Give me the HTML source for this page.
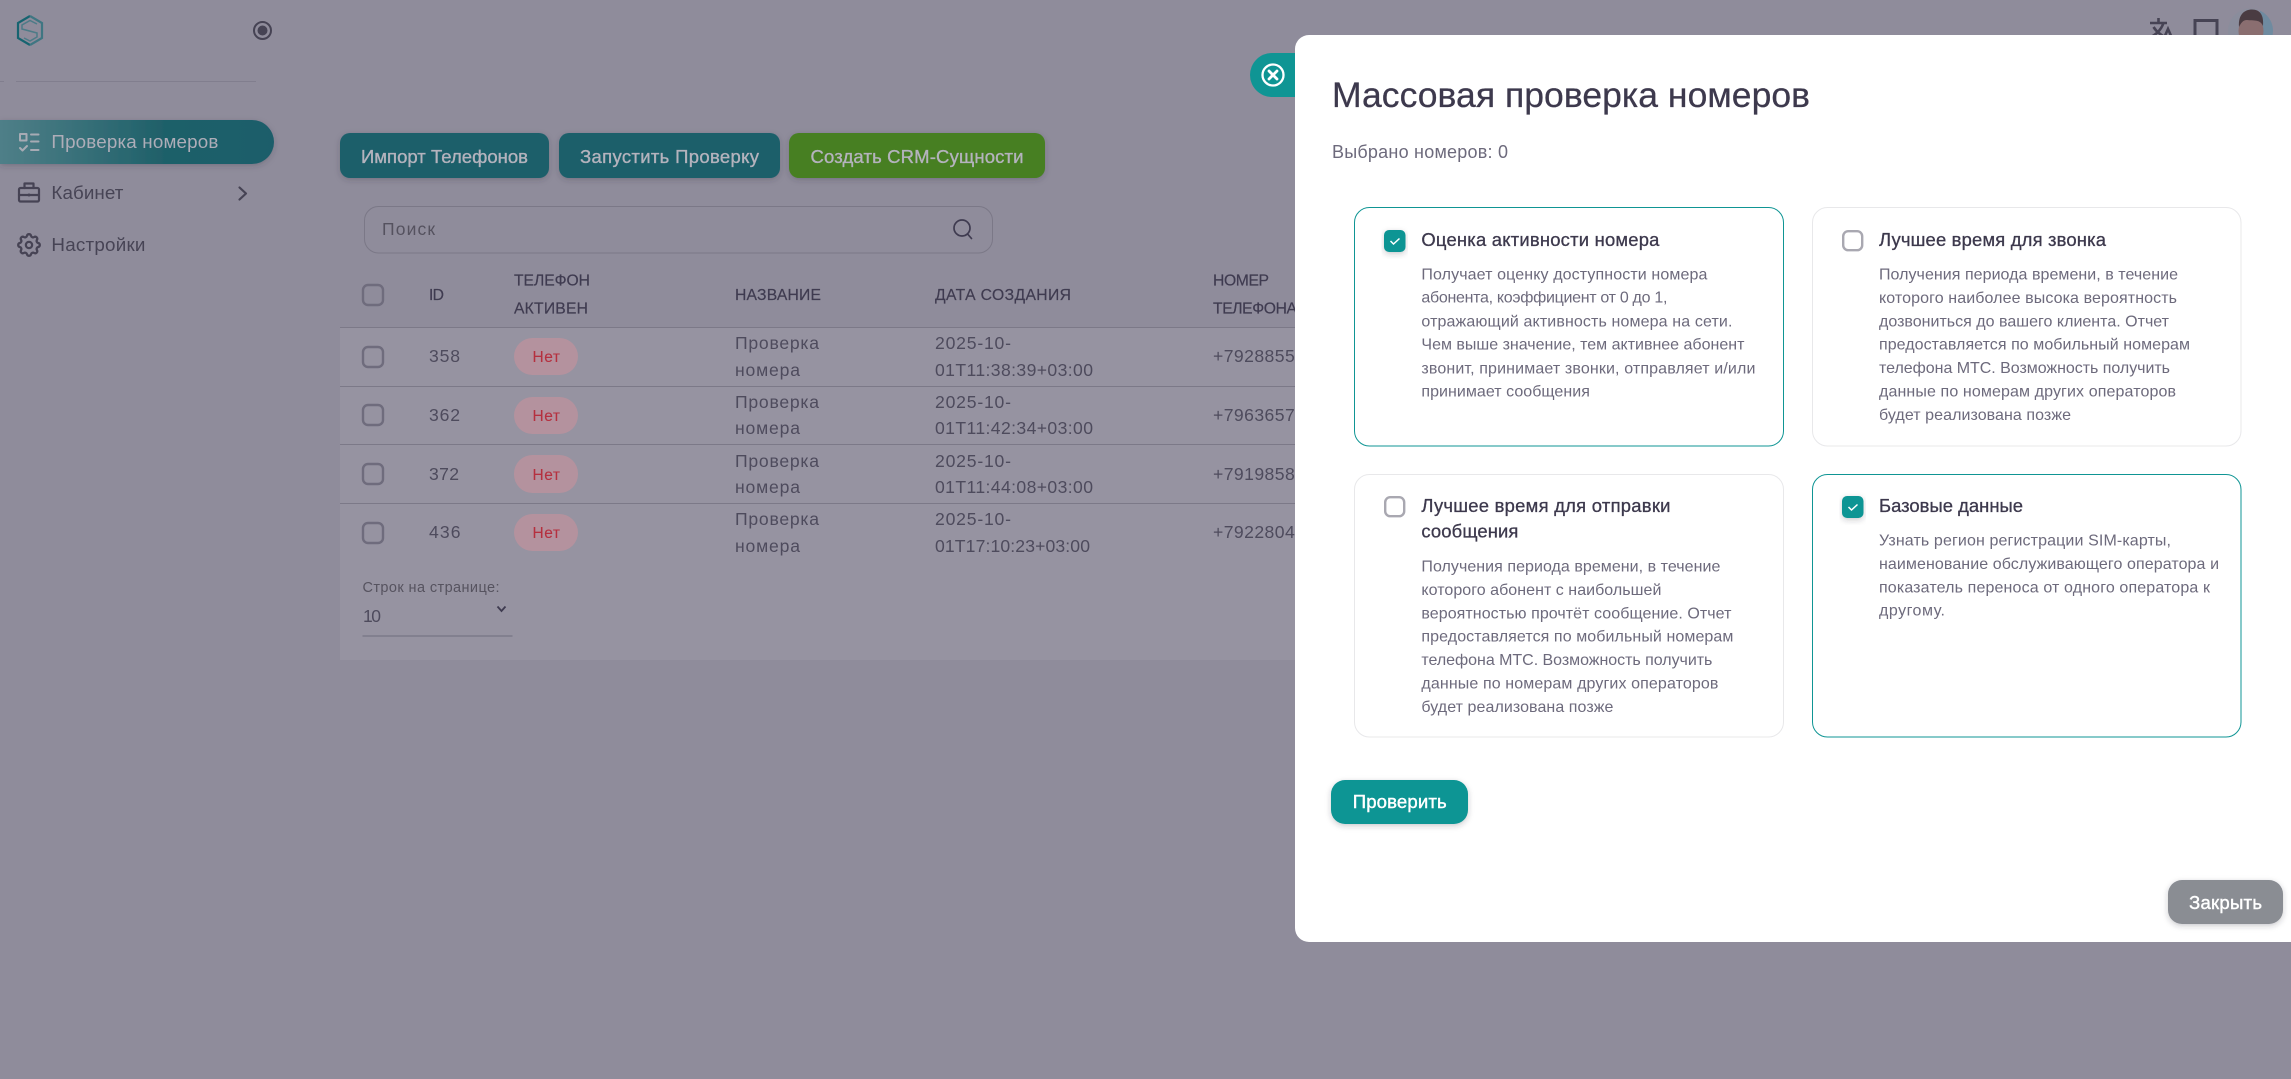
<!DOCTYPE html>
<html lang="ru">
<head>
<meta charset="utf-8">
<title>Массовая проверка номеров</title>
<style>
html,body{margin:0;padding:0;width:2291px;height:1079px;overflow:hidden;background:#8f8c9b}
svg{display:block;position:absolute;left:0;top:0}
text{font-family:"Liberation Sans",sans-serif;white-space:pre}
.side{font-size:18.8px;fill:#474455}
.btn{font-size:18.5px;fill:#b4b3bd;stroke:#b4b3bd;stroke-width:.35px}
.th{font-size:15.7px;fill:#3f3b50;stroke:#3f3b50;stroke-width:.2px}
.td{font-size:17.6px;fill:#4e4b5d}
.no{font-size:15.5px;fill:#b5303f;stroke:#b5303f;stroke-width:.1px}
.t{font-size:18.4px;fill:#3d394d;stroke:#3d394d;stroke-width:.3px}
.b{font-size:16px;fill:#6d6a7c}
.w{font-size:18.6px;fill:#fff;stroke:#fff;stroke-width:.4px}
.ic{fill:none;stroke:#464354;stroke-width:2.2;stroke-linecap:round;stroke-linejoin:round}
.cb{fill:none;stroke:#6f6c7d;stroke-width:2.4}
.cbw{fill:#fff;stroke:#a9a8b1;stroke-width:2.4}
</style>
</head>
<body>
<svg width="2291" height="1079" viewBox="0 0 2291 1079" xmlns="http://www.w3.org/2000/svg">
<defs>
<linearGradient id="pill" x1="0" x2="1" y1="0" y2="0"><stop offset="0" stop-color="#4f7f88"/><stop offset=".6" stop-color="#1f6069"/><stop offset="1" stop-color="#1c5d6a"/></linearGradient>
<filter id="sh" x="-10%" y="-20%" width="120%" height="150%"><feDropShadow dx="0" dy="2" stdDeviation="3" flood-color="#2f2b3d" flood-opacity=".25"/></filter>
<clipPath id="av"><circle cx="2250.5" cy="31" r="22.5"/></clipPath>
</defs>

<!-- page -->
<rect width="2291" height="1079" fill="#8f8c9b"/>
<rect x="340" y="328" width="960" height="332" fill="#9693a1"/>

<!-- logo -->
<g fill="none" stroke-width="2.2">
<path d="M30 16L18 23V38L30 45" stroke="#166470"/>
<path d="M30 16L42 23V38L30 45" stroke="#3f7682"/>
<path d="M37 24L30 20.5L22 25V29L37 33V37L30 41L24 38" stroke="#4d7b87" stroke-width="1.5"/>
</g>
<circle cx="262.5" cy="30.5" r="8.5" fill="none" stroke="#464354" stroke-width="2"/>
<circle cx="262.5" cy="30.5" r="5" fill="#464354"/>
<rect x="16" y="81" width="240" height="1" fill="#817e8e"/>
<rect x="0" y="81" width="4" height="1" fill="#817e8e"/>

<!-- sidebar -->
<path d="M0 120H252a22 22 0 0 1 0 44H0Z" fill="url(#pill)" filter="url(#sh)"/>
<g fill="none" stroke="#a7abb4" stroke-width="2" stroke-linecap="round" stroke-linejoin="round">
<rect x="20" y="134" width="6.5" height="6.5"/>
<path d="M31 134.500H38.500M31 141.500H38.500M31 150H38.500M20 148L22.500 150.500L27 146"/>
</g>
<text class="side" x="51.4" y="148" textLength="167" style="fill:#aeadb8">Проверка номеров</text>
<g class="ic">
<rect x="19" y="188" width="20" height="13.5" rx="1.5"/>
<path d="M24.500 188V183.500H33.500V188M19 195H39"/>
</g>
<circle cx="29" cy="195" r="1.5" fill="#464354"/>
<text class="side" x="51.4" y="199" textLength="72">Кабинет</text>
<path class="ic" d="M239.500 187.500L246 193.500L239.500 199.500"/>
<g transform="translate(14.6 230.6) scale(1.2)" fill="none" stroke="#464354" stroke-width="1.9" stroke-linecap="round" stroke-linejoin="round">
<path d="M10.325 4.317c.426 -1.756 2.924 -1.756 3.35 0a1.724 1.724 0 0 0 2.573 1.066c1.543 -.94 3.31 .826 2.37 2.37a1.724 1.724 0 0 0 1.065 2.572c1.756 .426 1.756 2.924 0 3.35a1.724 1.724 0 0 0 -1.066 2.573c.94 1.543 -.826 3.31 -2.37 2.37a1.724 1.724 0 0 0 -2.572 1.065c-.426 1.756 -2.924 1.756 -3.35 0a1.724 1.724 0 0 0 -2.573 -1.066c-1.543 .94 -3.31 -.826 -2.37 -2.37a1.724 1.724 0 0 0 -1.065 -2.572c-1.756 -.426 -1.756 -2.924 0 -3.35a1.724 1.724 0 0 0 1.066 -2.573c-.94 -1.543 .826 -3.31 2.37 -2.37c1 .608 2.296 .07 2.572 -1.065z"/>
<circle cx="12" cy="12" r="2.6"/>
</g>
<text class="side" x="51.4" y="251" textLength="94">Настройки</text>

<!-- top bar icons -->
<g fill="none" stroke="#464354" stroke-width="2.6">
<path d="M2150 23H2167M2158.500 18V23M2163.500 23C2161 30 2157 34 2151 37M2153.500 27C2156 31 2159 33.500 2163 36M2164 38L2168 29L2172 38"/>
<rect x="2195" y="20.500" width="22" height="22" stroke-width="3"/>
</g>
<g clip-path="url(#av)">
<rect x="2228" y="8" width="46" height="46" fill="#8a8d9c"/>
<rect x="2260" y="8" width="14" height="46" fill="#6f8ba0"/>
<ellipse cx="2251" cy="31" rx="12.5" ry="15" fill="#8a6e70"/>
<path d="M2239 27C2238 14 2245 9.500 2252 9.500C2260 9.500 2264 15 2263 26C2260 19 2254 21 2247 20C2243 20 2241 23 2239 27Z" fill="#4a3c42"/>
</g>

<!-- actions -->
<rect x="340" y="133" width="209" height="45" rx="10" fill="#1c5f6b" filter="url(#sh)"/>
<rect x="559" y="133" width="221" height="45" rx="10" fill="#1c5f6b" filter="url(#sh)"/>
<rect x="789" y="133" width="256" height="45" rx="10" fill="#467f20" filter="url(#sh)"/>
<text class="btn" x="361" y="163" textLength="167">Импорт Телефонов</text>
<text class="btn" x="580" y="163" textLength="179">Запустить Проверку</text>
<text class="btn" x="810.5" y="163" textLength="213">Создать CRM-Сущности</text>

<!-- search -->
<rect x="364.500" y="206.500" width="628" height="46.500" rx="14" fill="none" stroke="#7b7887" stroke-width="1"/>
<text x="382" y="235" style="font-size:17.5px;fill:#55525f" textLength="53">Поиск</text>
<circle cx="962" cy="228" r="8" fill="none" stroke="#3f3b50" stroke-width="1.7"/>
<path d="M968 234.500L971.500 238.500" stroke="#3f3b50" stroke-width="1.7" stroke-linecap="round"/>

<!-- table head -->
<rect x="363" y="285" width="20" height="20" rx="5" class="cb"/>
<text class="th" x="429" y="300" textLength="15">ID</text>
<text class="th" x="514" y="285.5" textLength="76">ТЕЛЕФОН</text>
<text class="th" x="514" y="313.5" textLength="74">АКТИВЕН</text>
<text class="th" x="735" y="300" textLength="86">НАЗВАНИЕ</text>
<text class="th" x="935" y="300" textLength="136">ДАТА СОЗДАНИЯ</text>
<text class="th" x="1213" y="285.5" textLength="56">НОМЕР</text>
<text class="th" x="1213" y="313.5" textLength="84">ТЕЛЕФОНА</text>
<g fill="#7c7988">
<rect x="340" y="327" width="960" height="1"/>
<rect x="340" y="386" width="960" height="1"/>
<rect x="340" y="444" width="960" height="1"/>
<rect x="340" y="503" width="960" height="1"/>
</g>

<!-- row 1 -->
<rect x="363" y="347" width="20" height="20" rx="5" class="cb"/>
<text class="td" x="429" y="362" textLength="31">358</text>
<rect x="514" y="338" width="64" height="37" rx="18.5" fill="#b4929e"/>
<text class="no" x="532.5" y="362" textLength="27.5">Нет</text>
<text class="td" x="735" y="349" textLength="84">Проверка</text>
<text class="td" x="735" y="376" textLength="65">номера</text>
<text class="td" x="935" y="349" textLength="76">2025-10-</text>
<text class="td" x="935" y="376" textLength="158">01T11:38:39+03:00</text>
<text class="td" x="1213" y="362" textLength="92">+79288554</text>

<!-- row 2 -->
<rect x="363" y="405" width="20" height="20" rx="5" class="cb"/>
<text class="td" x="429" y="421" textLength="31">362</text>
<rect x="514" y="397" width="64" height="37" rx="18.5" fill="#b4929e"/>
<text class="no" x="532.5" y="421" textLength="27.5">Нет</text>
<text class="td" x="735" y="408" textLength="84">Проверка</text>
<text class="td" x="735" y="434" textLength="65">номера</text>
<text class="td" x="935" y="408" textLength="76">2025-10-</text>
<text class="td" x="935" y="434" textLength="158">01T11:42:34+03:00</text>
<text class="td" x="1213" y="421" textLength="92">+79636572</text>

<!-- row 3 -->
<rect x="363" y="464" width="20" height="20" rx="5" class="cb"/>
<text class="td" x="429" y="480" textLength="30">372</text>
<rect x="514" y="455" width="64" height="38" rx="18.5" fill="#b4929e"/>
<text class="no" x="532.5" y="480" textLength="27.5">Нет</text>
<text class="td" x="735" y="467" textLength="84">Проверка</text>
<text class="td" x="735" y="493" textLength="65">номера</text>
<text class="td" x="935" y="467" textLength="76">2025-10-</text>
<text class="td" x="935" y="493" textLength="158">01T11:44:08+03:00</text>
<text class="td" x="1213" y="480" textLength="92">+79198581</text>

<!-- row 4 -->
<rect x="363" y="523" width="20" height="20" rx="5" class="cb"/>
<text class="td" x="429" y="538" textLength="31.5">436</text>
<rect x="514" y="514" width="64" height="37" rx="18.5" fill="#b4929e"/>
<text class="no" x="532.5" y="538" textLength="27.5">Нет</text>
<text class="td" x="735" y="525" textLength="84">Проверка</text>
<text class="td" x="735" y="552" textLength="65">номера</text>
<text class="td" x="935" y="525" textLength="76">2025-10-</text>
<text class="td" x="935" y="552" textLength="155">01T17:10:23+03:00</text>
<text class="td" x="1213" y="538" textLength="92">+79228041</text>

<!-- pagination -->
<text x="362.5" y="592" style="font-size:14.5px;fill:#56535f" textLength="137">Строк на странице:</text>
<text x="363" y="622" style="font-size:17.5px;fill:#4e4b5d" textLength="18">10</text>
<path d="M497.500 606.500L501.500 611L505.500 606.500" fill="none" stroke="#3f3b50" stroke-width="1.8"/>
<rect x="362.5" y="635.5" width="150" height="1" fill="#6f6c7d"/>

<!-- modal tab -->
<path d="M1300 53H1272a22 22 0 0 0 0 44H1300Z" fill="#0f9594"/>
<circle cx="1273" cy="75" r="10.5" fill="none" stroke="#fff" stroke-width="2.3"/>
<path d="M1269 71L1277 79M1277 71L1269 79" stroke="#fff" stroke-width="2.8" stroke-linecap="round"/>

<!-- modal -->
<path d="M1309 35H2291V942H1309a14 14 0 0 1 -14 -14V49a14 14 0 0 1 14 -14Z" fill="#fff"/>
<text x="1332" y="107" style="font-size:35.5px;fill:#3d394d;stroke:#3d394d;stroke-width:.25px" textLength="478">Массовая проверка номеров</text>
<text x="1332" y="158" style="font-size:18px;fill:#6d6a7c" textLength="176">Выбрано номеров: 0</text>

<!-- card 1 -->
<rect x="1354.5" y="207.5" width="429" height="238.5" rx="15" fill="#fff" stroke="#0f9594" stroke-width="1"/>
<rect x="1384" y="230" width="21.5" height="22" rx="5" fill="#0f9594" filter="url(#sh)"/>
<path d="M1390.500 241L1393.500 244L1399.500 238.500" fill="none" stroke="#fff" stroke-width="1.5"/>
<text class="t" x="1421.4" y="246" textLength="238">Оценка активности номера</text>
<text class="b" x="1421.4" y="279.5" textLength="286">Получает оценку доступности номера</text>
<text class="b" x="1421.4" y="302.5" textLength="246">абонента, коэффициент от 0 до 1,</text>
<text class="b" x="1421.4" y="326.5" textLength="311">отражающий активность номера на сети.</text>
<text class="b" x="1421.4" y="349.5" textLength="323">Чем выше значение, тем активнее абонент</text>
<text class="b" x="1421.4" y="373.5" textLength="334">звонит, принимает звонки, отправляет и/или</text>
<text class="b" x="1421.4" y="396.5" textLength="168.5">принимает сообщения</text>

<!-- card 2 -->
<rect x="1812.5" y="207.5" width="428.5" height="238.500" rx="15" fill="#fff" stroke="#e8e8ea" stroke-width="1"/>
<rect x="1843.2" y="231.2" width="19" height="19" rx="5" class="cbw"/>
<text class="t" x="1879" y="246" textLength="227">Лучшее время для звонка</text>
<text class="b" x="1879" y="279.5" textLength="299">Получения периода времени, в течение</text>
<text class="b" x="1879" y="302.9" textLength="298">которого наиболее высока вероятность</text>
<text class="b" x="1879" y="326.5" textLength="290">дозвониться до вашего клиента. Отчет</text>
<text class="b" x="1879" y="349.7" textLength="311">предоставляется по мобильный номерам</text>
<text class="b" x="1879" y="373.1" textLength="291">телефона МТС. Возможность получить</text>
<text class="b" x="1879" y="396.5" textLength="297">данные по номерам других операторов</text>
<text class="b" x="1879" y="419.9" textLength="192">будет реализована позже</text>

<!-- card 3 -->
<rect x="1354.5" y="474.5" width="429" height="262.5" rx="15" fill="#fff" stroke="#e8e8ea" stroke-width="1"/>
<rect x="1385.2" y="497.2" width="19" height="19" rx="5" class="cbw"/>
<text class="t" x="1421.4" y="512" textLength="249">Лучшее время для отправки</text>
<text class="t" x="1421.4" y="537.5" textLength="97">сообщения</text>
<text class="b" x="1421.4" y="571.5" textLength="299">Получения периода времени, в течение</text>
<text class="b" x="1421.4" y="594.9" textLength="240">которого абонент с наибольшей</text>
<text class="b" x="1421.4" y="618.3" textLength="310">вероятностью прочтёт сообщение. Отчет</text>
<text class="b" x="1421.4" y="641.7" textLength="312">предоставляется по мобильный номерам</text>
<text class="b" x="1421.4" y="665.1" textLength="291">телефона МТС. Возможность получить</text>
<text class="b" x="1421.4" y="688.5" textLength="297">данные по номерам других операторов</text>
<text class="b" x="1421.4" y="711.9" textLength="192">будет реализована позже</text>

<!-- card 4 -->
<rect x="1812.5" y="474.5" width="428.5" height="262.5" rx="15" fill="#fff" stroke="#0f9594" stroke-width="1"/>
<rect x="1842" y="496" width="21.5" height="22" rx="5" fill="#0f9594" filter="url(#sh)"/>
<path d="M1848.500 507L1851.500 510L1857.500 504.500" fill="none" stroke="#fff" stroke-width="1.5"/>
<text class="t" x="1879" y="512" textLength="144">Базовые данные</text>
<text class="b" x="1879" y="545.5" textLength="292">Узнать регион регистрации SIM-карты,</text>
<text class="b" x="1879" y="568.9" textLength="340">наименование обслуживающего оператора и</text>
<text class="b" x="1879" y="592.3" textLength="331">показатель переноса от одного оператора к</text>
<text class="b" x="1879" y="615.7" textLength="66">другому.</text>

<!-- modal buttons -->
<rect x="1331" y="780" width="137" height="44" rx="14" fill="#0f9594" filter="url(#sh)"/>
<text class="w" x="1352.7" y="808" textLength="94">Проверить</text>
<rect x="2168" y="880" width="115" height="44" rx="14" fill="#8a8d93" filter="url(#sh)"/>
<text class="w" x="2189" y="909" textLength="73">Закрыть</text>
</svg>
</body>
</html>
